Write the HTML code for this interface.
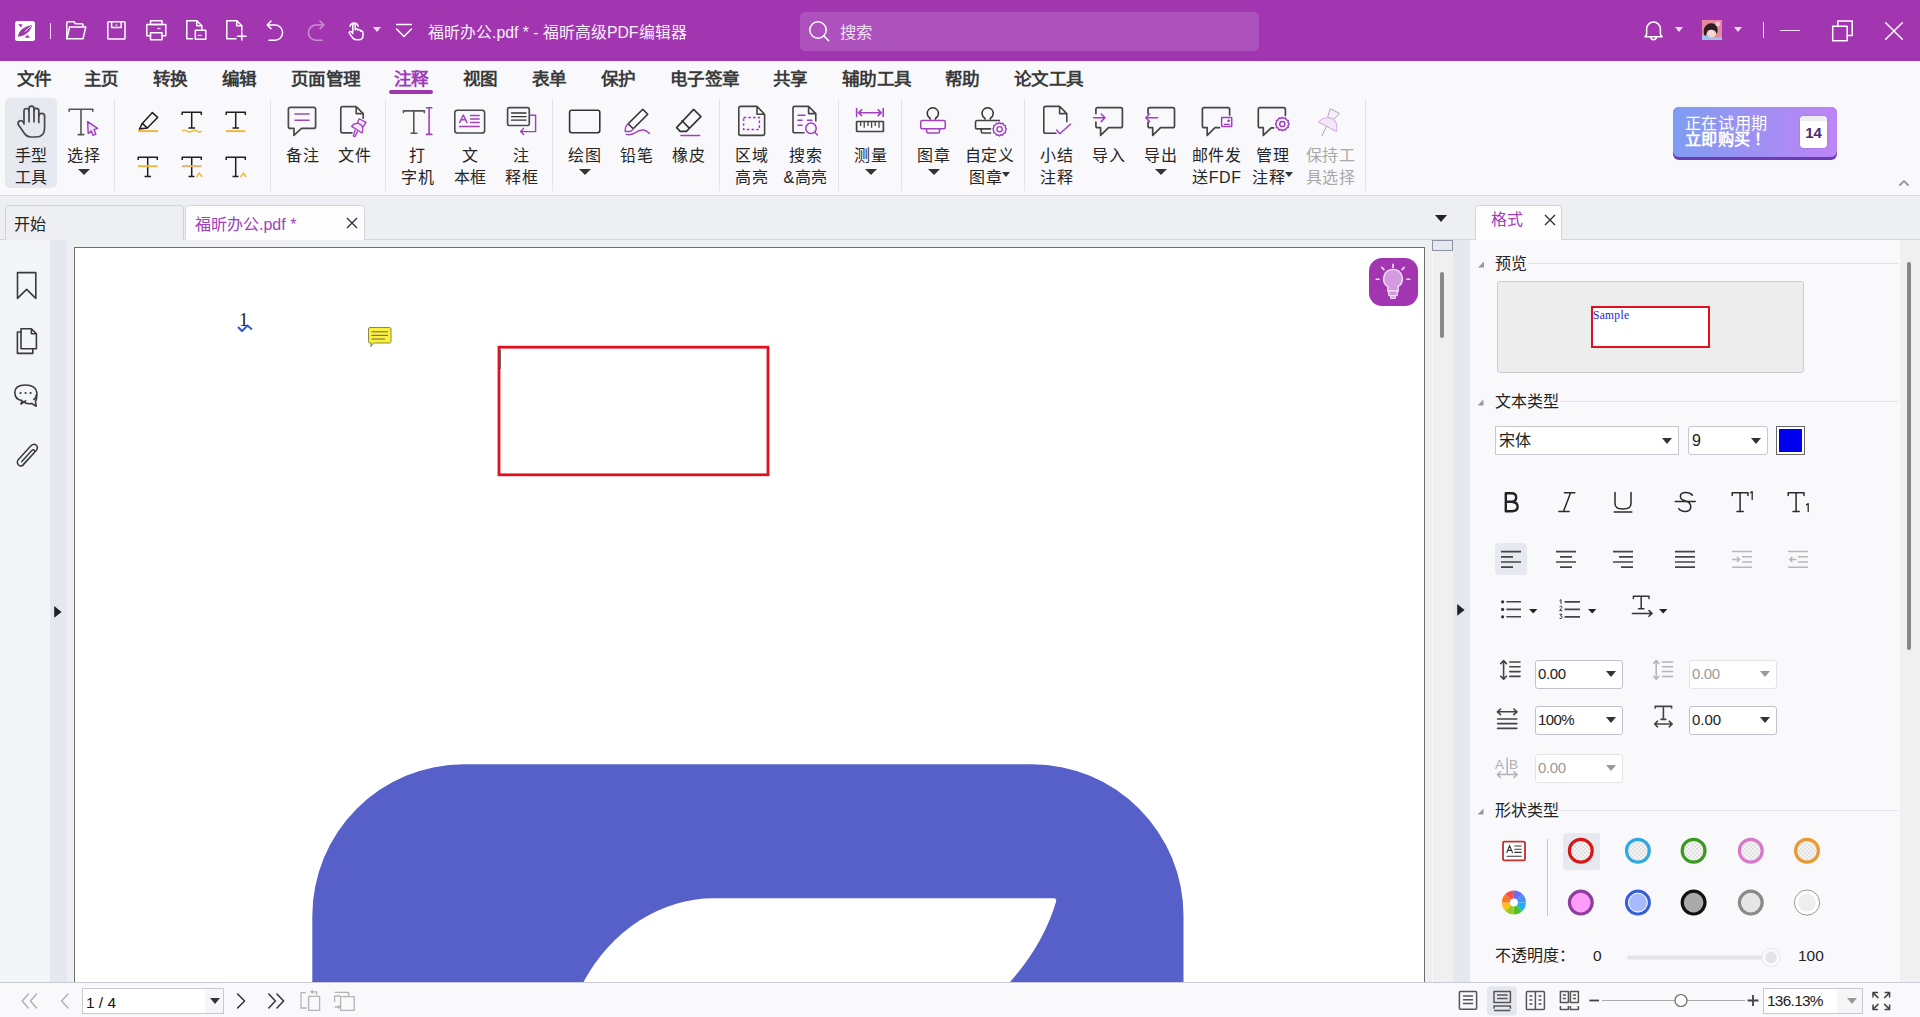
<!DOCTYPE html>
<html lang="zh-CN"><head><meta charset="utf-8">
<style>
*{box-sizing:border-box;margin:0;padding:0}
html,body{width:1920px;height:1017px;overflow:hidden;background:#F9F9FC;font-family:"Liberation Sans",sans-serif;color:#222}
.a{position:absolute}
.t{position:absolute;white-space:nowrap;line-height:1}
svg{position:absolute;overflow:visible}
.mi{position:absolute;top:70px;font-size:17.6px;font-weight:700;color:#3A3A3A;line-height:18px;white-space:nowrap;letter-spacing:-0.6px}
.rt{position:absolute;width:100px;font-size:16px;color:#252525;line-height:22px;text-align:center;white-space:nowrap;letter-spacing:0.6px;text-indent:0.6px}
.ia{display:inline-block;width:0;height:0;border-left:4px solid transparent;border-right:4px solid transparent;border-top:5px solid #333;vertical-align:top;margin-top:5px;margin-left:0}
.sep{position:absolute;top:99px;width:1px;height:92px;background:#E2E4EA}
.ic{fill:none;stroke:#444;stroke-width:1.6;stroke-linecap:round;stroke-linejoin:round}
.pp{fill:none;stroke:#A03FC0;stroke-width:1.6;stroke-linecap:round;stroke-linejoin:round}
.wh{fill:none;stroke:#fff;stroke-width:1.5;stroke-linecap:round;stroke-linejoin:round}
.arr{position:absolute;width:0;height:0;border-left:6px solid transparent;border-right:6px solid transparent;border-top:6px solid #333}
</style></head><body>
<!-- title bar -->
<div class="a" style="left:0;top:0;width:1920px;height:61px;background:#A236B1"></div>
<!-- menubar+ribbon -->
<div class="a" style="left:0;top:61px;width:1920px;height:134px;background:#F9F9FC"></div>
<div class="a" style="left:0;top:195px;width:1920px;height:1px;background:#D5D8E0"></div>
<div class="a" style="left:5px;top:98px;width:52px;height:90px;border-radius:5px;background:#E7E9F0"></div>
<!-- tab bar -->
<div class="a" style="left:0;top:196px;width:1920px;height:44px;background:#EEEFF3"></div>
<div class="a" style="left:0;top:239px;width:1920px;height:1px;background:#D3D6DE"></div>
<!-- left nav -->
<div class="a" style="left:0;top:240px;width:50px;height:742px;background:#F4F5F8"></div>
<div class="a" style="left:50px;top:240px;width:17px;height:742px;background:#E5E8F0"></div>
<!-- doc bg -->
<div class="a" style="left:67px;top:240px;width:1366px;height:742px;background:#EEEFF3"></div>
<!-- page -->
<div class="a" style="left:74px;top:247px;width:1351px;height:740px;background:#fff;border:1px solid #6E6E6E;border-bottom:none"></div>
<!-- doc scrollbar -->
<div class="a" style="left:1432px;top:240px;width:1px;height:742px;background:#FAFAFA"></div>
<div class="a" style="left:1433px;top:240px;width:20px;height:742px;background:#F0F0F0"></div>
<div class="a" style="left:1432px;top:240px;width:21px;height:11px;background:#E6E8F0;border:1px solid #8C93A8"></div>
<div class="a" style="left:1440px;top:272px;width:4px;height:66px;background:#888;border-radius:2px"></div>
<!-- right strip -->
<div class="a" style="left:1453px;top:240px;width:17px;height:742px;background:#E5E8F0"></div>
<!-- right panel -->
<div class="a" style="left:1470px;top:240px;width:430px;height:742px;background:#F9F9FC"></div>
<div class="a" style="left:1900px;top:240px;width:20px;height:742px;background:#F0F0F0"></div>
<div class="a" style="left:1907px;top:262px;width:4px;height:388px;background:#888;border-radius:2px"></div>
<!-- status bar -->
<div class="a" style="left:0;top:982px;width:1920px;height:1px;background:#C9CCD4"></div>
<div class="a" style="left:0;top:983px;width:1920px;height:34px;background:#F9F9FC"></div>
<!-- logo -->
<svg style="left:15px;top:21px" width="20" height="20" viewBox="0 0 20 20">
<rect x="0" y="0" width="20" height="20" rx="2.5" fill="#fff"/>
<path d="M2.8 15.8 C3.6 10 8 5.4 17.2 3.9 C15.6 10 11 14.6 2.8 15.8 Z" fill="#A236B1"/>
<path d="M3.1 3.3 L7.6 3.3 L5.9 6.5 Z" fill="#A236B1"/>
<path d="M9.7 16.8 L15 16.8 L12.4 13.8 Z" fill="#A236B1"/>
<path d="M9.8 10.6 L16.4 4.8" stroke="#fff" stroke-width="0.9" fill="none"/>
</svg>
<div class="a" style="left:50px;top:23px;width:1.2px;height:16px;background:#F3DDF6"></div>
<!-- folder -->
<svg style="left:66px;top:21px" width="21" height="19" viewBox="0 0 21 19">
<path class="wh" d="M0.8 17.8 L0.8 2.2 Q0.8 0.8 2.2 0.8 L8 0.8 L9.5 2.8 L16 2.8 Q17 2.8 17 3.8 L17 5.6" stroke="#F6E0FA"/>
<path class="wh" d="M0.8 17.8 L3.6 6 L19.8 6 L17 17.8 Z" stroke="#F6E0FA"/>
</svg>
<!-- save -->
<svg style="left:107px;top:21px" width="19" height="19" viewBox="0 0 19 19">
<rect class="wh" x="0.8" y="0.8" width="17.2" height="17.2" rx="0.8" stroke="#F6E0FA"/>
<path class="wh" d="M4.6 0.8 L4.6 6.6 L14.2 6.6 L14.2 0.8" stroke="#F6E0FA"/>
<path d="M8.4 4.2 L10.4 4.2" stroke="#F6E0FA" stroke-width="1.2"/>
</svg>
<!-- print -->
<svg style="left:146px;top:20px" width="21" height="21" viewBox="0 0 21 21">
<rect class="wh" x="4.5" y="0.8" width="11.5" height="3.8" stroke="#F6E0FA"/>
<path class="wh" d="M4.5 15.8 L0.8 15.8 L0.8 4.6 L19.8 4.6 L19.8 15.8 L16 15.8" stroke="#F6E0FA"/>
<rect class="wh" x="4.5" y="12.8" width="11.5" height="6.9" stroke="#F6E0FA"/>
<path d="M11.2 8.5 L14.5 8.5" stroke="#F6E0FA" stroke-width="1.3"/>
</svg>
<!-- doc export -->
<svg style="left:186px;top:20px" width="21" height="21" viewBox="0 0 21 21">
<path class="wh" d="M6.5 18.8 L0.8 18.8 L0.8 0.8 L10.8 0.8 L15.8 5.8 L15.8 10" stroke="#F6E0FA"/>
<path class="wh" d="M10.8 0.8 L10.8 5.8 L15.8 5.8" stroke="#F6E0FA" stroke-width="1"/>
<rect class="wh" x="9.3" y="10.3" width="10.5" height="9" stroke="#F6E0FA"/>
<path d="M11.8 15.4 L15.8 15.4" stroke="#F6E0FA" stroke-width="1.2"/>
</svg>
<!-- new doc -->
<svg style="left:226px;top:20px" width="21" height="21" viewBox="0 0 21 21">
<path class="wh" d="M10 18.8 L0.8 18.8 L0.8 0.8 L10.8 0.8 L15.8 5.8 L15.8 11" stroke="#F6E0FA"/>
<path class="wh" d="M10.8 0.8 L10.8 5.8 L15.8 5.8" stroke="#F6E0FA" stroke-width="1"/>
<path class="wh" d="M15.8 12.5 L15.8 20 M11.5 16.3 L20 16.3" stroke="#F6E0FA"/>
</svg>
<!-- undo -->
<svg style="left:266px;top:20px" width="19" height="21" viewBox="0 0 19 21">
<path class="wh" d="M1.6 5 L9 5 A7.6 7.6 0 0 1 9 20.2 L3 20.2" stroke="#F6E0FA"/>
<path class="wh" d="M5 1 L1.2 5 L5 8.6" stroke="#F6E0FA"/>
</svg>
<!-- redo dim -->
<svg style="left:306px;top:20px;opacity:.45" width="19" height="21" viewBox="0 0 19 21">
<path class="wh" d="M17.4 5 L10 5 A7.6 7.6 0 0 0 10 20.2 L16 20.2" stroke="#F6E0FA"/>
<path class="wh" d="M14 1 L17.8 5 L14 8.6" stroke="#F6E0FA"/>
</svg>
<!-- hand pointer -->
<svg style="left:348px;top:20px" width="17" height="21" viewBox="0 0 17 21">
<path class="wh" d="M4.8 12.2 V5 Q4.8 3.5 6 3.5 Q7.2 3.5 7.2 5 V9.8 Q7.6 8.6 8.8 8.8 Q9.9 9 9.9 10.2 Q10.4 9.3 11.5 9.6 Q12.5 10 12.5 11.2 Q13.1 10.6 13.9 11 Q15 11.5 15 13 V15.2 Q15 19.8 10.6 19.8 H8.6 Q6 19.8 4.6 17.8 L1.4 13.4 Q0.8 12.3 1.8 11.7 Q2.8 11.2 3.8 12.2 L4.8 13.4" stroke="#F6E0FA" stroke-width="1.3"/>
<path class="wh" d="M2.1 6.2 A4.1 4.1 0 0 1 10.1 6.2" stroke="#F6E0FA" stroke-width="1.2"/>
</svg>
<div class="arr" style="left:373px;top:27px;border-left-width:4px;border-right-width:4px;border-top:5px solid #F3DDF6"></div>
<!-- customize -->
<svg style="left:396px;top:23px" width="16" height="15" viewBox="0 0 16 15">
<path class="wh" d="M0.6 1.5 L15.4 1.5 M0.6 6 L8 13.6 L15.4 6" stroke="#F6E0FA" stroke-width="1.3"/>
</svg>
<div class="t" style="left:428px;top:24px;font-size:15.8px;color:#FAF0FC;line-height:17px">福昕办公.pdf * - 福昕高级PDF编辑器</div>
<!-- search -->
<div class="a" style="left:800px;top:11.5px;width:459px;height:39px;border-radius:5px;background:#AD51BD"></div>
<svg style="left:809px;top:21px" width="21" height="21" viewBox="0 0 21 21">
<circle cx="9" cy="9" r="8.2" class="wh" stroke="#F6E0FA" stroke-width="1.5"/>
<path d="M14.8 14.8 L19.6 19.6" class="wh" stroke="#F6E0FA" stroke-width="1.5"/>
</svg>
<div class="t" style="left:840px;top:24px;font-size:16.4px;color:#F2DFF5;line-height:17px">搜索</div>
<!-- bell -->
<svg style="left:1643px;top:20px" width="21" height="21" viewBox="0 0 21 21">
<path class="wh" d="M2 16.8 L3.6 14.5 L3.6 9 A6.9 6.9 0 0 1 17.4 9 L17.4 14.5 L19 16.8 Z" stroke="#F6E0FA" stroke-width="1.4"/>
<path class="wh" d="M7.6 16.8 A2.9 2.9 0 0 0 13.4 16.8" stroke="#F6E0FA" stroke-width="1.4"/>
</svg>
<div class="arr" style="left:1675px;top:27px;border-left-width:4.5px;border-right-width:4.5px;border-top:5px solid #F3DDF6"></div>
<!-- avatar -->
<svg style="left:1702px;top:20px" width="20" height="20" viewBox="0 0 20 20">
<rect width="20" height="20" fill="#E8889E"/>
<path d="M0 20 V15 Q4 13 8 16 Q12 19 20 17 V20 Z" fill="#9EC4EC"/>
<path d="M2 15 Q0.5 6 7 3.5 Q13 2 15 7 Q16.5 11 14.5 14 Q12 9 7 10 Q4.5 11 4 16 Z" fill="#2A2024"/>
<path d="M5 13.5 Q6 9.6 10 9.8 Q14 10.4 14 14 Q13.4 17.4 9.6 17.4 Q5.6 17 5 13.5 Z" fill="#F4D6CE"/>
<circle cx="15.8" cy="4" r="2.4" fill="#F6C8DA"/>
</svg>
<div class="arr" style="left:1734px;top:27px;border-left-width:4.5px;border-right-width:4.5px;border-top:5px solid #F3DDF6"></div>
<div class="a" style="left:1763px;top:22px;width:1.2px;height:16px;background:#F3DDF6"></div>
<div class="a" style="left:1780px;top:29.5px;width:20px;height:1.3px;background:#F6E0FA"></div>
<svg style="left:1832px;top:20px" width="21" height="22" viewBox="0 0 21 22">
<rect x="0.7" y="6.3" width="14.5" height="14.5" class="wh" stroke="#F6E0FA" stroke-width="1.4"/>
<path class="wh" d="M5.8 6.3 L5.8 0.9 L20.2 0.9 L20.2 15.4 L15.2 15.4" stroke="#F6E0FA" stroke-width="1.4"/>
</svg>
<svg style="left:1885px;top:22px" width="18" height="18" viewBox="0 0 18 18">
<path class="wh" d="M0.7 0.7 L17.3 17.3 M17.3 0.7 L0.7 17.3" stroke="#F6E0FA" stroke-width="1.4"/>
</svg>
<div class="mi" style="left:17px">文件</div>
<div class="mi" style="left:84px">主页</div>
<div class="mi" style="left:153px">转换</div>
<div class="mi" style="left:222px">编辑</div>
<div class="mi" style="left:291px">页面管理</div>
<div class="mi" style="left:394px;color:#A038B8">注释</div>
<div class="a" style="left:389px;top:90px;width:44px;height:4px;border-radius:2px;background:#A035B0"></div>
<div class="mi" style="left:463px">视图</div>
<div class="mi" style="left:532px">表单</div>
<div class="mi" style="left:601px">保护</div>
<div class="mi" style="left:670px">电子签章</div>
<div class="mi" style="left:773px">共享</div>
<div class="mi" style="left:842px">辅助工具</div>
<div class="mi" style="left:945px">帮助</div>
<div class="mi" style="left:1014px">论文工具</div>
<div class="rt" style="left:-19px;top:144.5px">手型</div>
<div class="rt" style="left:-19px;top:166.5px">工具</div>
<div class="rt" style="left:33.5px;top:144.5px">选择</div>
<div class="arr" style="left:77.5px;top:169px;border-left-width:6px;border-right-width:6px;border-top-width:6px"></div>
<div class="rt" style="left:252.5px;top:144.5px">备注</div>
<div class="rt" style="left:304.5px;top:144.5px">文件</div>
<div class="rt" style="left:367.5px;top:144.5px">打</div>
<div class="rt" style="left:367.5px;top:166.5px">字机</div>
<div class="rt" style="left:420px;top:144.5px">文</div>
<div class="rt" style="left:420px;top:166.5px">本框</div>
<div class="rt" style="left:471.5px;top:144.5px">注</div>
<div class="rt" style="left:471.5px;top:166.5px">释框</div>
<div class="rt" style="left:534.5px;top:144.5px">绘图</div>
<div class="arr" style="left:578.5px;top:169px;border-left-width:6px;border-right-width:6px;border-top-width:6px"></div>
<div class="rt" style="left:586.5px;top:144.5px">铅笔</div>
<div class="rt" style="left:638.5px;top:144.5px">橡皮</div>
<div class="rt" style="left:701.5px;top:144.5px">区域</div>
<div class="rt" style="left:701.5px;top:166.5px">高亮</div>
<div class="rt" style="left:755.5px;top:144.5px">搜索</div>
<div class="rt" style="left:755.5px;top:166.5px">&amp;高亮</div>
<div class="rt" style="left:820.5px;top:144.5px">测量</div>
<div class="arr" style="left:864.5px;top:169px;border-left-width:6px;border-right-width:6px;border-top-width:6px"></div>
<div class="rt" style="left:883.5px;top:144.5px">图章</div>
<div class="arr" style="left:927.5px;top:169px;border-left-width:6px;border-right-width:6px;border-top-width:6px"></div>
<div class="rt" style="left:939.5px;top:144.5px">自定义</div>
<div class="rt" style="left:939.5px;top:166.5px">图章<span class="ia"></span></div>
<div class="rt" style="left:1006.5px;top:144.5px">小结</div>
<div class="rt" style="left:1006.5px;top:166.5px">注释</div>
<div class="rt" style="left:1058.5px;top:144.5px">导入</div>
<div class="rt" style="left:1110.5px;top:144.5px">导出</div>
<div class="arr" style="left:1154.5px;top:169px;border-left-width:6px;border-right-width:6px;border-top-width:6px"></div>
<div class="rt" style="left:1166.5px;top:144.5px">邮件发</div>
<div class="rt" style="left:1166.5px;top:166.5px">送FDF</div>
<div class="rt" style="left:1222.5px;top:144.5px">管理</div>
<div class="rt" style="left:1222.5px;top:166.5px">注释<span class="ia"></span></div>
<div class="rt" style="left:1280.5px;top:144.5px;color:#A8A8A8">保持工</div>
<div class="rt" style="left:1280.5px;top:166.5px;color:#A8A8A8">具选择</div>
<div class="sep" style="left:114px"></div>
<div class="sep" style="left:270px"></div>
<div class="sep" style="left:385px"></div>
<div class="sep" style="left:552px"></div>
<div class="sep" style="left:719px"></div>
<div class="sep" style="left:838px"></div>
<div class="sep" style="left:901px"></div>
<div class="sep" style="left:1024px"></div>
<div class="sep" style="left:1365px"></div>
<svg style="left:0;top:0" width="1920" height="200" viewBox="0 0 1920 200">
<g fill="none" stroke="#474747" stroke-width="1.7" stroke-linecap="round" stroke-linejoin="round">
<!-- hand -->
<path d="M24 124 V111 A2.5 2.5 0 0 1 29 111 V108.6 A2.5 2.5 0 0 1 34 108.6 V110.8 A2.4 2.4 0 0 1 38.8 110.8 V116.3 A2.9 2.9 0 0 1 44.6 116.3 V128 Q44.6 137 36 137 L30.5 137 Q27 137 24.5 133.5 L18.4 124.8 Q17.2 122.4 19.4 121 Q21.6 119.8 23.4 122.4 L24 123.4"/>
<path d="M29 111 V121.8 M34 108.6 V121.8 M38.8 113 V122.6"/>
<!-- select T -->
<path d="M69.2 111.2 V109.2 H92.8 V111.2 M81 109.2 V134.5 M78.2 134.6 H83.8" stroke="#555" stroke-width="1.6"/>
</g>
<path d="M87.6 121.6 L97.6 128.4 L94 129.6 L95.9 134.2 L93.1 135.4 L91.2 130.9 L88.2 133.6 Z" fill="#F2E4F8" stroke="#A03FC0" stroke-width="1.4" stroke-linejoin="round"/>
<!-- highlight group -->
<g fill="none" stroke="#1E1E1E" stroke-width="1.5" stroke-linejoin="round">
<path d="M152.4 112.6 L157.6 117.4 L147.3 128 L142.3 123.4 Z"/>
<path d="M142.3 123.4 L139.4 129 L147.3 128"/>
<path d="M182.2 115 V112.3 H201.3 V115 M191.7 112.3 V128 M188.5 128 H195"/>
<path d="M226.2 115 V112.3 H245.3 V115 M235.7 112.3 V128 M232.5 128 H239"/>
<path d="M138.2 160 V157.3 H157.3 V160 M147.7 157.3 V176.6 M144.5 176.6 H151"/>
<path d="M182.2 160 V157.3 H201.3 V160 M191.7 157.3 V176.6 M188.5 176.6 H194.5"/>
<path d="M226.2 160 V157.3 H245.3 V160 M235.7 157.3 V176.6 M232.5 176.6 H238.5"/>
</g>
<path d="M140.5 128.5 L143 127.5 L141.8 126 Z" fill="#E8A820"/>
<g fill="none" stroke="#F0B840" stroke-width="2" stroke-linecap="butt">
<path d="M138 131.1 H158"/>
<path d="M182 131.2 Q184.5 129.4 187 131.2 T192 131.2 T197 131.2 T202 131.2" stroke-width="1.5"/>
<path d="M226 131.1 H245.5"/>
<path d="M138 166.2 H157.5"/>
<path d="M182 166.2 H201.5" stroke="#E8B070"/>
<path d="M196.5 177 L199.3 173 L202.1 177" stroke-width="1.4"/>
<path d="M240.5 177 L243.3 173 L246.1 177" stroke-width="1.4"/>
</g>
<!-- notes -->
<g fill="none" stroke="#4A4A4A" stroke-width="1.7" stroke-linejoin="round" stroke-linecap="round">
<path d="M294 128.4 H290.3 Q288.4 128.4 288.4 126.4 V109.3 Q288.4 107.4 290.3 107.4 H313.7 Q315.6 107.4 315.6 109.3 V126.4 Q315.6 128.4 313.7 128.4 H301.5 L293.9 135.4 Z"/>
<path d="M352 132.8 H342.6 Q340.8 132.8 340.8 131 V108.4 Q340.8 106.6 342.6 106.6 H356.2 L363.2 113.6 V118.2 M356.2 106.6 V113.6 H363.2"/>
</g>
<path d="M295 114 H309 M295 120.3 H309" stroke="#9A4CB0" stroke-width="1.6" stroke-linecap="round"/>
<g fill="#F6E8FA" stroke="#A03FC0" stroke-width="1.3" stroke-linejoin="round">
<path d="M359.2 118.8 L366 122.4 L363.2 126.8 L357.2 123.4 Z"/>
<path d="M351.6 126.4 Q355 121.5 360.5 124.4 Q364.3 128 362 133 Z"/>
<path d="M355.3 130 L353.4 135.8 Q354.3 137 355.5 136 L357.6 131.2"/>
</g>
<!-- typewriter etc -->
<g fill="none" stroke="#555" stroke-width="1.6" stroke-linejoin="round" stroke-linecap="round">
<path d="M403.4 112.6 V110.9 H424.3 V112.6 M413.8 110.9 V133 M411 133.2 H416.8"/>
<rect x="454.8" y="110.2" width="29.8" height="22.8" rx="2.6" stroke="#4A4A4A"/>
<rect x="507.6" y="107.6" width="21.7" height="17.9" rx="1.6" stroke="#4A4A4A" stroke-width="1.7"/>
<path d="M511.5 113 H526 M511.5 116.6 H526 M511.5 120.2 H526" stroke="#333" stroke-width="1.3"/>
</g>
<g fill="none" stroke="#A03FC0" stroke-width="1.4" stroke-linejoin="round" stroke-linecap="round">
<path d="M429.1 107.8 V134.4 M426.6 107.8 H431.8 M426.6 134.4 H431.8" stroke-width="1.6"/>
<path d="M459.6 122.6 L463.3 115 L467 122.6 M461 119.8 H465.6"/>
<path d="M470.6 115.5 H479.2 M470.6 119 H479.2 M470.6 122.5 H479.2 M459.6 126.5 H479.2"/>
<path d="M529.4 115.2 H535.6 V131.6 H520.6 M523.6 128.6 L520.6 131.6 L523.6 134.6"/>
</g>
<!-- drawing -->
<g fill="none" stroke="#333" stroke-width="1.6" stroke-linejoin="round" stroke-linecap="round">
<rect x="569.6" y="110.3" width="30.2" height="22.4" rx="2.2"/>
<path d="M642.8 109.3 L647.7 114.2 L633.2 128.7 L628.2 123.7 Z"/>
<path d="M693.6 109.4 L700.9 116.6 L686.4 131.4 H680.2 L676.6 127.6 Z M682 120.8 L689 127.9"/>
</g>
<g fill="none" stroke="#A03FC0" stroke-width="1.4" stroke-linejoin="round" stroke-linecap="round">
<path d="M628.2 123.7 Q625 126 625.2 131.5 L630 131.5 Q632 131 633.2 128.7"/>
<path d="M626.2 134.3 Q630 135.6 634.5 133.2 Q639.5 129.5 644 130 Q647 131 649.5 133.5"/>
<path d="M681 135.5 H699.6" stroke-width="1.6"/>
</g>
<!-- area highlight / search highlight -->
<g fill="none" stroke="#444" stroke-width="1.6" stroke-linejoin="round" stroke-linecap="round">
<path d="M757 106.4 H740.6 Q738.8 106.4 738.8 108.2 V133.6 Q738.8 135.4 740.6 135.4 H762.8 Q764.6 135.4 764.6 133.6 V114.2 L757 106.4 V114.2 H764.6"/>
<path d="M804 132.8 H794.8 Q793 132.8 793 131 V108.2 Q793 106.4 794.8 106.4 H808.6 L815.8 113.6 V121 M808.6 106.4 V113.6 H815.8"/>
</g>
<g fill="none" stroke="#A03FC0" stroke-width="1.5" stroke-linecap="butt">
<rect x="743.6" y="117.6" width="15.8" height="11.8" stroke-dasharray="2.6 2.1"/>
<path d="M798 115.3 H805 M798 120.3 H802 M807.5 120.3 H812 M798 125.3 H802" stroke-linecap="round"/>
<circle cx="811" cy="128.3" r="5.2"/>
<path d="M814.8 132.2 L817.4 135" stroke-linecap="round"/>
</g>
<!-- measure -->
<g fill="none" stroke="#A03FC0" stroke-width="1.6" stroke-linecap="round" stroke-linejoin="round">
<path d="M856.6 108.6 V116.4 M883.2 108.6 V116.4 M858.6 112.7 H881.2 M861.6 109.8 L858.6 112.7 L861.6 115.6 M878.2 109.8 L881.2 112.7 L878.2 115.6"/>
</g>
<g fill="none" stroke="#444" stroke-width="1.7" stroke-linejoin="round">
<rect x="856.6" y="121.5" width="26.8" height="10" rx="0.6"/>
<path d="M860.6 121.5 V126 M864.2 121.5 V127.8 M868 121.5 V126 M871.6 121.5 V127.8 M875.2 121.5 V126 M879 121.5 V127.8" stroke-width="1.3"/>
</g>
<!-- stamp -->
<g fill="none" stroke="#333" stroke-width="1.5" stroke-linejoin="round">
<path d="M930.6 119.6 L929.8 118 A5.6 5.6 0 1 1 935.9 118 L935.1 119.6"/>
<path d="M985.4 119.6 L984.6 118 A5.6 5.6 0 1 1 990.7 118 L989.9 119.6"/>
<path d="M1000 120.5 H977.2 Q975.5 120.5 975.5 122.2 V127.2 Q975.5 128.9 977.2 128.9 H991.2 M981.3 128.9 V131.4 Q981.3 133 982.9 133 H991.2" stroke="#444" stroke-width="1.6"/>
</g>
<g fill="none" stroke="#A03FC0" stroke-width="1.5" stroke-linejoin="round">
<rect x="920.7" y="120.5" width="24.6" height="8.3" rx="1.5"/>
<path d="M926.6 128.8 V131.6 Q926.6 133 928 133 H938.2 Q939.5 133 939.5 131.6 V128.8"/>
</g>
<g fill="none" stroke="#A03FC0" stroke-width="1.4">
<path id="gear" d="M999.6 122.4 L1001 123.7 L1002.9 123.3 L1003.6 125.1 L1005.5 125.7 L1005.3 127.6 L1006.4 129.2 L1005.3 130.8 L1005.5 132.7 L1003.6 133.3 L1002.9 135.1 L1001 134.7 L999.6 136 L998.2 134.7 L996.3 135.1 L995.6 133.3 L993.7 132.7 L993.9 130.8 L992.8 129.2 L993.9 127.6 L993.7 125.7 L995.6 125.1 L996.3 123.3 L998.2 123.7 Z" stroke-linejoin="round"/>
<circle cx="999.6" cy="129.2" r="2.6"/>
</g>
<!-- summary -->
<path d="M1056 133.2 H1045.6 Q1043.8 133.2 1043.8 131.4 V108.2 Q1043.8 106.4 1045.6 106.4 H1059.6 L1066.8 113.6 V121.6 M1059.6 106.4 V113.6 H1066.8" fill="none" stroke="#444" stroke-width="1.6" stroke-linejoin="round" stroke-linecap="round"/>
<path d="M1056.6 130 L1059.8 133.8 L1070.6 124" fill="none" stroke="#A03FC0" stroke-width="1.5" stroke-linecap="round" stroke-linejoin="round"/>
<!-- import/export/mail/manage bubbles -->
<g fill="none" stroke="#444" stroke-width="1.7" stroke-linejoin="round" stroke-linecap="round">
<path d="M1095.9 113.6 V109.4 Q1095.9 107.7 1097.6 107.7 H1120.7 Q1122.4 107.7 1122.4 109.4 V126 Q1122.4 127.7 1120.7 127.7 H1108.5 L1100.6 135.4 V127.7 H1097.6 Q1095.9 127.7 1095.9 126 V122"/>
<path d="M1148 113.6 V109.4 Q1148 107.7 1149.7 107.7 H1172.8 Q1174.5 107.7 1174.5 109.4 V126 Q1174.5 127.7 1172.8 127.7 H1160.6 L1152.7 135.4 V127.7 H1149.7 Q1148 127.7 1148 126 V122"/>
<path d="M1229.6 115 V109.4 Q1229.6 107.7 1227.9 107.7 H1204.1 Q1202.4 107.7 1202.4 109.4 V126 Q1202.4 127.7 1204.1 127.7 H1207.2 V135.4 L1215 127.7 H1219.5"/>
<path d="M1285.4 115.5 V109.4 Q1285.4 107.7 1283.7 107.7 H1260 Q1258.3 107.7 1258.3 109.4 V126 Q1258.3 127.7 1260 127.7 H1263.3 V135.4 L1271.2 127.9 H1273.6"/>
</g>
<g fill="none" stroke="#A03FC0" stroke-width="1.5" stroke-linejoin="round" stroke-linecap="round">
<path d="M1093.6 117.8 H1105 M1101.2 114 L1105 117.8 L1101.2 121.6"/>
<path d="M1157.6 117.8 H1145.8 M1149.6 114 L1145.8 117.8 L1149.6 121.6"/>
<rect x="1221.6" y="117.5" width="10.1" height="9" rx="0.5"/>
<path d="M1224.2 124.4 H1229.4" stroke-width="1.2"/>
<circle cx="1228.6" cy="120.8" r="0.6" fill="#A03FC0"/>
<use href="#gear" transform="translate(282.7 -5.2)"/>
<circle cx="1282.3" cy="124" r="2.6"/>
</g>
<!-- keep tool (dim) -->
<g stroke-linejoin="round" stroke-linecap="round">
<path d="M1330.6 109 L1339.6 113.4 L1333.6 119.6 L1328 117.2 Z" fill="#F7F0FA" stroke="#AAA" stroke-width="1"/>
<path d="M1318.4 122 Q1326 115.5 1333 119 Q1338 123 1336.4 131.4 Z" fill="#F6E6FA" stroke="#D8B0E4" stroke-width="1.1"/>
<path d="M1326.4 126.6 L1322 135.6" stroke="#AAA" stroke-width="1"/>
</g>
</svg>
<!-- trial badge -->
<div class="a" style="left:1673px;top:107px;width:164px;height:53px;border-radius:6px;background:#6B3AB8"></div>
<div class="a" style="left:1673px;top:107px;width:164px;height:50px;border-radius:6px;background:linear-gradient(90deg,#7F9DF2 0%,#9B92F2 45%,#BE84F6 100%)"></div>
<div class="t" style="left:1684.5px;top:114.5px;font-size:16.2px;letter-spacing:0.7px;line-height:17px;color:#fff">正在试用期</div>
<div class="t" style="left:1684.5px;top:131px;font-size:16.2px;letter-spacing:0.5px;line-height:17px;color:#fff;font-weight:700">立即购买<span style="margin-left:3px">！</span></div>
<div class="a" style="left:1800px;top:116px;width:27px;height:32px;border-radius:4px;background:#fff;box-shadow:0 0 2px rgba(120,60,180,.4)"></div>
<div class="a" style="left:1800px;top:116px;width:27px;height:5px;border-radius:4px 4px 0 0;background:#EEEEF2"></div>
<div class="t" style="left:1802px;top:124px;width:23px;text-align:center;font-size:15px;line-height:17px;color:#4A2A7A;font-weight:700">14</div>
<svg style="left:1898px;top:179px" width="12" height="8" viewBox="0 0 12 8"><path d="M1.5 6.5 L6 2 L10.5 6.5" fill="none" stroke="#999" stroke-width="1.8"/></svg>
<!-- doc tabs -->
<div class="a" style="left:5px;top:205px;width:179px;height:35px;background:#EEEFF3;border:1px solid #D0D3DC;border-bottom:none;border-radius:4px 4px 0 0"></div>
<div class="t" style="left:14px;top:216px;font-size:16px;line-height:17px;color:#222">开始</div>
<div class="a" style="left:185px;top:205px;width:180px;height:35px;background:#FDFDFE;border:1px solid #D3D6DE;border-bottom:none;border-radius:4px 4px 0 0"></div>
<div class="t" style="left:195px;top:216px;font-size:16px;line-height:17px;color:#A040B8">福昕办公.pdf *</div>
<svg style="left:346px;top:217px" width="12" height="12" viewBox="0 0 12 12"><path d="M1 1 L11 11 M11 1 L1 11" stroke="#333" stroke-width="1.4"/></svg>
<div class="arr" style="left:1435px;top:215px;border-left-width:6px;border-right-width:6px;border-top-width:7px;border-top-color:#222"></div>
<!-- panel tab -->
<div class="a" style="left:1475px;top:205px;width:87px;height:35px;background:#FDFDFE;border:1px solid #D3D6DE;border-bottom:none;border-radius:4px 4px 0 0"></div>
<div class="t" style="left:1491px;top:211px;font-size:16px;line-height:17px;color:#A040B8">格式</div>
<svg style="left:1544px;top:214px" width="12" height="12" viewBox="0 0 12 12"><path d="M1 1 L11 11 M11 1 L1 11" stroke="#333" stroke-width="1.4"/></svg>
<!-- left nav icons -->
<svg style="left:0;top:240px" width="70" height="742" viewBox="0 240 70 742">
<g fill="none" stroke="#3A3A3A" stroke-width="1.6" stroke-linejoin="round" stroke-linecap="round">
<path d="M17.5 272.6 H35.8 V298.4 L26.6 289.4 L17.5 298.4 Z"/>
<path d="M21 328.8 H31.4 L36.4 333.8 V348.8 H21 Z M31.4 328.8 V333.8 H36.4"/>
<path d="M21 332 H17.4 V353.4 H32.8 V348.8"/>
<path d="M33.8 399.4 Q37.5 396.6 36.8 392.6 Q35.6 385 25.2 385 Q15 385 14.8 392.6 Q14.8 399.6 22 400.6 L21 404 L25.6 400.8"/>
<path d="M36.2 395 Q37.4 398.6 35.4 401.6 L36.2 406.2 L31.6 403.4 Q27 404.6 23.4 401.6"/>
<path d="M23.2 464.6 L36.2 450.4 Q38.6 447.6 36.4 445.2 Q34 443 31.2 445.6 L18.4 459.4 Q16.2 462.4 18.6 465 Q21 467.2 23.6 464.6 L34 453 Q35.4 451.4 34.2 450.2 Q33 449.2 31.8 450.6 L21.8 461.6" stroke-width="1.5"/>
</g>
<circle cx="20.6" cy="393" r="1.1" fill="#3A3A3A"/><circle cx="25.6" cy="393" r="1.1" fill="#3A3A3A"/><circle cx="30.6" cy="393" r="1.1" fill="#3A3A3A"/>
<path d="M54.2 606 L61.6 611.9 L54.2 617.8 Z" fill="#222"/>
</svg>
<svg style="left:1453px;top:600px" width="17" height="20" viewBox="0 0 17 20"><path d="M4.2 4 L11.6 9.9 L4.2 15.8 Z" fill="#222"/></svg>
<!-- page content -->
<svg style="left:0;top:0" width="1430" height="982" viewBox="0 0 1430 982">
<path d="M312.3 982 V916 A151.7 151.7 0 0 1 464 764.3 H1032 A151.5 151.5 0 0 1 1183.5 915.8 V982 Z" fill="#5760C8"/>
<path d="M583.5 982 A154 180 0 0 1 714 898.3 H1053.5 Q1057 898.3 1056 902 Q1043 945 1010 982 Z" fill="#fff"/>
<!-- red rect -->
<rect x="499" y="347.2" width="269" height="127.6" fill="none" stroke="#E01020" stroke-width="2.8"/>
<rect x="499.2" y="350" width="1.6" height="19" fill="#555"/>
<!-- yellow note -->
<path d="M370 327.5 H389.5 Q391 327.5 391 329 V341.5 Q391 343 389.5 343 H373.5 L370.8 346.6 L371.2 343 H370 Q368.5 343 368.5 341.5 V329 Q368.5 327.5 370 327.5 Z" fill="#FAF03A" stroke="#6E6A3A" stroke-width="0.8"/>
<path d="M371.5 331.8 H388 M371.5 335.4 H388 M371.5 339 H385" stroke="#555" stroke-width="0.9"/>
<!-- caret -->
<path d="M238 327 L242 331 L247.5 325.5 L252 329.5" fill="none" stroke="#2C5BD8" stroke-width="2"/>
</svg>
<div class="t" style="left:239px;top:311px;font-family:'Liberation Serif',serif;font-size:19px;line-height:17px;color:#222">1</div>
<!-- lightbulb -->
<div class="a" style="left:1369px;top:258px;width:49px;height:48px;border-radius:13px;background:#A236B1"></div>
<svg style="left:1369px;top:258px" width="49" height="48" viewBox="0 0 49 48">
<g stroke="#F4E0F8" stroke-width="1.6" stroke-linecap="round" fill="none">
<path d="M24 6.2 V9.6 M12.8 9.4 L15 11.6 M35.2 9.4 L33 11.6 M7.2 21.2 H10 M38 21.2 H40.8"/>
</g>
<path d="M24 11.4 A9.4 9.4 0 0 0 18.8 28.6 V33 H29.2 V28.6 A9.4 9.4 0 0 0 24 11.4 Z" fill="#D49ADF" stroke="#F4E0F8" stroke-width="1.4"/>
<path d="M19.6 33 H28.4 V36.4 Q28.4 37.6 27.2 37.6 H20.8 Q19.6 37.6 19.6 36.4 Z M21.6 37.6 V39.6 Q21.6 40.4 22.4 40.4 H25.6 Q26.4 40.4 26.4 39.6 V37.6" fill="#D49ADF" stroke="#F4E0F8" stroke-width="1.2"/>
</svg>
<!-- panel sections -->
<svg style="left:1470px;top:240px" width="430" height="742" viewBox="1470 240 430 742">
<path d="M1478 267.5 L1484 267.5 L1484 261.5 Z" fill="#999"/>
<path d="M1528 263.5 H1898" stroke="#E2E3E8" stroke-width="1"/>
<path d="M1477.5 405.5 L1483.5 405.5 L1483.5 399.5 Z" fill="#999"/>
<path d="M1560 401.5 H1898" stroke="#E2E3E8" stroke-width="1"/>
<path d="M1477.5 814.5 L1483.5 814.5 L1483.5 808.5 Z" fill="#999"/>
<path d="M1560 810.5 H1898" stroke="#E2E3E8" stroke-width="1"/>
</svg>
<div class="t" style="left:1495px;top:255px;font-size:16px;line-height:17px;color:#222">预览</div>
<div class="a" style="left:1497px;top:281px;width:307px;height:92px;border:1px solid #C9CBD2;border-radius:3px;background:#EDEDED"></div>
<div class="a" style="left:1590.5px;top:305.5px;width:119px;height:42px;border:2.5px solid #E01020;background:#fff"></div>
<div class="t" style="left:1593px;top:310px;font-family:'Liberation Serif',serif;font-size:11.5px;line-height:11px;color:#2020E0;letter-spacing:0.3px">Sample</div>
<div class="t" style="left:1495px;top:393px;font-size:16px;line-height:17px;color:#222">文本类型</div>
<div class="a" style="left:1495px;top:426px;width:184px;height:29px;border:1px solid #C6C8D0;background:#fff"></div>
<div class="t" style="left:1499px;top:432px;font-size:16px;line-height:17px;color:#222">宋体</div>
<div class="arr" style="left:1662px;top:438px;border-left-width:5px;border-right-width:5px;border-top-width:6px"></div>
<div class="a" style="left:1688px;top:426px;width:80px;height:29px;border:1px solid #C6C8D0;border-radius:3px;background:#fff"></div>
<div class="t" style="left:1692px;top:432px;font-size:16px;line-height:17px;color:#222">9</div>
<div class="arr" style="left:1751px;top:438px;border-left-width:5px;border-right-width:5px;border-top-width:6px"></div>
<div class="a" style="left:1776px;top:426px;width:29px;height:29px;border:1px solid #666;background:#fff"></div>
<div class="a" style="left:1779px;top:429px;width:23px;height:23px;background:#0000F0"></div>
<!-- format buttons -->
<div class="a" style="left:1495px;top:543px;width:32px;height:32px;border-radius:4px;background:#E7E9F0"></div>
<div class="a" style="left:1562.5px;top:833px;width:37.5px;height:37px;border-radius:3px;background:#E7E9F0"></div>
<svg style="left:1470px;top:470px" width="430" height="510" viewBox="1470 470 430 510">
<path d="M1505.8 493.2 H1511.6 Q1516.2 493.2 1516.2 497.6 Q1516.2 501.3 1512 501.8 Q1517.6 502.4 1517.6 506.6 Q1517.6 511.2 1512.2 511.2 H1505.8 Z M1505.8 501.8 H1512" fill="none" stroke="#222" stroke-width="2.4" stroke-linejoin="round"/>
<g fill="none" stroke="#2A2A2A" stroke-width="1.5" stroke-linecap="round" stroke-linejoin="round">
<path d="M1564.4 492.8 H1574.8 M1558.8 511.6 H1569.2 M1570.6 492.8 L1563.4 511.6"/>
<path d="M1615 492.6 V503.4 Q1615 509 1623 509 Q1631 509 1631 503.4 V492.6 M1614.2 512 H1631.8"/>
<path d="M1692.4 495.2 Q1690 492.6 1685.6 492.6 Q1680.4 492.6 1680.4 496.4 Q1680.4 499.4 1685 500.8 Q1690.8 502.6 1690.8 506.6 Q1690.8 511.4 1685.2 511.4 Q1680.6 511.4 1678.8 508.6 M1675.2 501.4 H1695.2"/>
<path d="M1732.2 495.6 V492.8 H1748 V495.6 M1740.1 492.8 V511.4 M1737 511.6 H1743.2"/>
<path d="M1750.6 492.8 L1752.2 491.6 V499.6" stroke-width="1.3"/>
<path d="M1788.2 495.6 V492.8 H1804 V495.6 M1796.1 492.8 V511.4 M1793 511.6 H1799.2"/>
<path d="M1806.6 504.8 L1808.2 503.6 V511.6" stroke-width="1.3"/>
</g>
<g stroke="#444" stroke-width="1.7">
<path d="M1501 551.6 H1521 M1501 556.8 H1513 M1501 562 H1521 M1501 567.2 H1513"/>
<path d="M1556 551.6 H1576 M1560 556.8 H1572 M1556 562 H1576 M1560 567.2 H1572"/>
<path d="M1613 551.6 H1633 M1619 556.8 H1633 M1613 562 H1633 M1621 567.2 H1633"/>
<path d="M1675 551.6 H1695 M1675 556.8 H1695 M1675 562 H1695 M1675 567.2 H1695"/>
</g>
<g stroke="#B8B8B8" stroke-width="1.5" fill="none">
<path d="M1732 551.6 H1752 M1742 556.8 H1752 M1742 562 H1752 M1732 567.2 H1752 M1732 559.4 H1739.5 M1737 556.9 L1739.6 559.4 L1737 561.9"/>
<path d="M1788 551.6 H1808 M1798 556.8 H1808 M1798 562 H1808 M1788 567.2 H1808 M1790 559.4 H1796.5 M1792.4 556.9 L1789.8 559.4 L1792.4 561.9"/>
</g>
<g fill="#333">
<circle cx="1502.6" cy="601.8" r="1.6"/><circle cx="1502.6" cy="609.4" r="1.6"/><circle cx="1502.6" cy="616.8" r="1.6"/>
</g>
<path d="M1506.4 601.8 H1521 M1506.4 609.4 H1521 M1506.4 616.8 H1521" stroke="#444" stroke-width="1.6"/>
<path d="M1529 609 H1537.4 L1533.2 613.4 Z" fill="#222"/>
<path d="M1564.6 601.8 H1580 M1564.6 609.4 H1580 M1564.6 616.8 H1580" stroke="#444" stroke-width="1.7"/>
<g fill="none" stroke="#333" stroke-width="1" stroke-linejoin="round">
<path d="M1559.6 600.6 L1561 599.6 V604"/>
<path d="M1559.6 606.8 Q1560.6 605.8 1561.6 606.4 Q1562.4 607.4 1561.4 608.4 L1559.6 610.6 H1562.4"/>
<path d="M1559.6 614.2 H1562 L1560.6 616 Q1562.4 616.2 1562.2 617.6 Q1561.6 619.2 1559.6 618.4"/>
</g>
<path d="M1588 609 H1596.4 L1592.2 613.4 Z" fill="#222"/>
<g fill="none" stroke="#333" stroke-width="1.5" stroke-linecap="round" stroke-linejoin="round">
<path d="M1633.4 598.6 V596.2 H1649 V598.6 M1641.2 596.2 V608.6 M1638.6 608.8 H1643.8"/>
<path d="M1632.4 613.4 H1652 M1649 610.6 L1652 613.4 L1649 616.2"/>
</g>
<path d="M1659 609 H1667.4 L1663.2 613.4 Z" fill="#222"/>
<!-- spacing icons -->
<g fill="none" stroke="#444" stroke-width="1.6" stroke-linecap="round" stroke-linejoin="round">
<path d="M1503.6 661 V679 M1500.8 663.6 L1503.6 660.6 L1506.4 663.6 M1500.8 676.2 L1503.6 679.2 L1506.4 676.2"/>
<path d="M1509.8 662 H1520 M1509.8 666.8 H1520 M1509.8 671.6 H1520 M1509.8 676.4 H1520"/>
<path d="M1497.6 711.8 H1516.8 M1500.6 709 L1497.4 711.8 L1500.6 714.6 M1513.8 709 L1517 711.8 L1513.8 714.6"/>
<path d="M1497.6 719 H1516.8 M1497.6 723.6 H1516.8 M1497.6 728.4 H1516.8"/>
<path d="M1655.2 708 V706.4 H1671.6 V708 M1663.4 706.4 V719.2 M1661 719.4 H1665.8 M1654.8 724 H1672 M1657.6 721.2 L1654.6 724 L1657.6 726.8 M1669.2 721.2 L1672.2 724 L1669.2 726.8"/>
</g>
<g fill="none" stroke="#B4B4B4" stroke-width="1.5" stroke-linecap="round" stroke-linejoin="round">
<path d="M1656.2 661 V679 M1653.6 663.6 L1656.2 660.6 L1658.8 663.6 M1653.6 676.2 L1656.2 679.2 L1658.8 676.2"/>
<path d="M1662.4 662 H1672.6 M1662.4 666.8 H1672.6 M1662.4 671.6 H1672.6 M1662.4 676.4 H1672.6"/>
<path d="M1497.6 774.6 H1516.8 M1500.4 771.8 L1497.4 774.6 L1500.4 777.4 M1514 771.8 L1517 774.6 L1514 777.4 M1507.2 758 V774.6"/>
</g>
<!-- shape type -->
<rect x="1503" y="841.6" width="22" height="18.8" rx="1.5" fill="#fff" stroke="#C03030" stroke-width="1.8"/>
<path d="M1506.6 853 L1509.6 845.6 L1512.6 853 M1507.8 850.4 H1511.4 M1514.4 846 H1521.6 M1514.4 849.2 H1521.6 M1514.4 852.4 H1521.6 M1506.6 856.2 H1521.6" fill="none" stroke="#333" stroke-width="1.1"/>
<path d="M1547.5 839 V916" stroke="#C8C8C8" stroke-width="1"/>
<defs>
<pattern id="chk" width="4" height="4" patternUnits="userSpaceOnUse"><rect width="4" height="4" fill="#F4F4F4"/><rect width="2" height="2" fill="#E2E2E2"/><rect x="2" y="2" width="2" height="2" fill="#E2E2E2"/></pattern>
</defs>
<g stroke-width="3.2">
<circle cx="1580.8" cy="850.8" r="11.4" fill="url(#chk)" stroke="#D81818"/>
<circle cx="1637.9" cy="850.8" r="11.4" fill="url(#chk)" stroke="#30A8E0"/>
<circle cx="1693.6" cy="850.8" r="11.4" fill="url(#chk)" stroke="#3A9A20"/>
<circle cx="1750.8" cy="850.8" r="11.4" fill="url(#chk)" stroke="#D878C8"/>
<circle cx="1807" cy="850.8" r="11.4" fill="url(#chk)" stroke="#E89A30"/>
<circle cx="1580.8" cy="902.6" r="11.4" fill="#FF9CF8" stroke="#8E3CA0"/>
<circle cx="1637.9" cy="902.6" r="11.4" fill="#A8BAFF" stroke="#3560D8"/>
<circle cx="1693.6" cy="902.6" r="11.4" fill="#AAAAAA" stroke="#111"/>
<circle cx="1750.8" cy="902.6" r="11.4" fill="#E6E6E6" stroke="#8A8A8A"/>
</g>
<circle cx="1637.9" cy="902.6" r="9.4" fill="none" stroke="#fff" stroke-width="1"/>
<circle cx="1807" cy="902.6" r="12.6" fill="#fff" stroke="#999" stroke-width="1"/>
<circle cx="1807" cy="902.6" r="9" fill="#EEEEEE"/>
<!-- color wheel -->
<g transform="translate(1513.9 902.4)">
<path d="M0 0 L0 -12 A12 12 0 0 1 8.5 -8.5 Z" fill="#6C6CF0"/>
<path d="M0 0 L8.5 -8.5 A12 12 0 0 1 12 0 Z" fill="#4A90F8"/>
<path d="M0 0 L12 0 A12 12 0 0 1 8.5 8.5 Z" fill="#20B0F0"/>
<path d="M0 0 L8.5 8.5 A12 12 0 0 1 0 12 Z" fill="#50C030"/>
<path d="M0 0 L0 12 A12 12 0 0 1 -8.5 8.5 Z" fill="#A0C820"/>
<path d="M0 0 L-8.5 8.5 A12 12 0 0 1 -12 0 Z" fill="#F8C020"/>
<path d="M0 0 L-12 0 A12 12 0 0 1 -8.5 -8.5 Z" fill="#F87820"/>
<path d="M0 0 L-8.5 -8.5 A12 12 0 0 1 0 -12 Z" fill="#F05050"/>
<circle r="4" fill="#fff"/>
</g>
<!-- opacity slider -->
<path d="M1629 957.6 H1770" stroke="#E2E4EA" stroke-width="4" stroke-linecap="round"/>
<circle cx="1771" cy="957.4" r="9.2" fill="#FAFAFC" stroke="#E6E8EE" stroke-width="1"/>
<circle cx="1771" cy="957.4" r="5.8" fill="#E2E4EA"/>
</svg>
<!-- spacing inputs -->
<div class="a" style="left:1534.5px;top:660px;width:88px;height:28.5px;border:1px solid #BFC2CA;border-radius:3px;background:#fff"></div>
<div class="t" style="left:1538px;top:665.5px;font-size:15px;letter-spacing:-0.4px;line-height:16px;color:#222">0.00</div>
<div class="arr" style="left:1606px;top:671px;border-left-width:5px;border-right-width:5px;border-top-width:6px"></div>
<div class="a" style="left:1688.5px;top:660px;width:88px;height:28.5px;border:1px solid #E3E4EA;border-radius:3px;background:#fff"></div>
<div class="t" style="left:1692px;top:665.5px;font-size:15px;letter-spacing:-0.4px;line-height:16px;color:#9A9A9A">0.00</div>
<div class="arr" style="left:1760px;top:671px;border-left-width:5px;border-right-width:5px;border-top-width:6px;border-top-color:#999"></div>
<div class="a" style="left:1534.5px;top:706px;width:88px;height:28.5px;border:1px solid #BFC2CA;border-radius:3px;background:#fff"></div>
<div class="t" style="left:1538px;top:711.5px;font-size:15px;line-height:16px;color:#222;letter-spacing:-0.6px">100%</div>
<div class="arr" style="left:1606px;top:717px;border-left-width:5px;border-right-width:5px;border-top-width:6px"></div>
<div class="a" style="left:1688.5px;top:706px;width:88px;height:28.5px;border:1px solid #BFC2CA;border-radius:3px;background:#fff"></div>
<div class="t" style="left:1692px;top:711.5px;font-size:15px;line-height:16px;color:#222">0.00</div>
<div class="arr" style="left:1760px;top:717px;border-left-width:5px;border-right-width:5px;border-top-width:6px"></div>
<div class="a" style="left:1534.5px;top:754px;width:88px;height:28.5px;border:1px solid #E3E4EA;border-radius:3px;background:#fff"></div>
<div class="t" style="left:1538px;top:759.5px;font-size:15px;letter-spacing:-0.4px;line-height:16px;color:#9A9A9A">0.00</div>
<div class="arr" style="left:1606px;top:765px;border-left-width:5px;border-right-width:5px;border-top-width:6px;border-top-color:#999"></div>
<div class="t" style="left:1495px;top:758px;font-size:13.5px;line-height:14px;color:#B0B0B0">A</div>
<div class="t" style="left:1509px;top:758px;font-size:13.5px;line-height:14px;color:#B0B0B0">B</div>
<div class="t" style="left:1495px;top:802px;font-size:16px;line-height:17px;color:#222">形状类型</div>
<div class="t" style="left:1495px;top:947px;font-size:16px;line-height:17px;color:#222">不透明度：</div>
<div class="t" style="left:1593px;top:948px;font-size:15.5px;line-height:16px;color:#222">0</div>
<div class="t" style="left:1798px;top:948px;font-size:15.5px;line-height:16px;color:#222">100</div>
<!-- status bar -->
<svg style="left:0;top:982px" width="1920" height="35" viewBox="0 982 1920 35">
<g fill="none" stroke="#B0B0B0" stroke-width="1.4" stroke-linecap="round" stroke-linejoin="round">
<path d="M28.4 994 L22.2 1001 L28.4 1008 M36.6 994 L30.4 1001 L36.6 1008"/>
<path d="M68 994 L61.6 1001 L68 1008"/>
</g>
<g fill="none" stroke="#333" stroke-width="1.5" stroke-linecap="round" stroke-linejoin="round">
<path d="M237.6 994 L244.6 1001 L237.6 1008"/>
<path d="M268.8 994 L275.4 1001 L268.8 1008 M277 994 L283.6 1001 L277 1008"/>
</g>
<g fill="none" stroke="#B4B4B4" stroke-width="1.3" stroke-linejoin="round">
<path d="M306.6 1008 H301 V992.6 H305.8 M308.6 996.4 H319.6 V1010.4 H308.6 Z M311 991.8 H316.6 V995 M312.8 990.2 L311 991.8 L312.8 993.4"/>
<path d="M340 996 H334.6 V1002 M340.6 996.6 H354.2 V1010.4 H340.6 Z M334.6 1007 H339.6 M338 1005.4 L339.8 1007 L338 1008.6 M334.6 992.4 H348.6 V996.4"/>
</g>
<!-- view icons -->
<g fill="none" stroke="#555" stroke-width="1.5" stroke-linejoin="round">
<rect x="1459.4" y="991.6" width="17.2" height="17.6" rx="1"/>
<path d="M1463 996 H1473 M1463 999.8 H1473 M1463 1003.6 H1473"/>
</g>
<rect x="1487" y="986.2" width="30" height="29.4" rx="4" fill="#E4E7EE"/>
<g fill="none" stroke="#555" stroke-width="1.5" stroke-linejoin="round">
<path d="M1494 1008.8 V1006 H1510.4 V1008.8 M1494 1010.6 H1510.4 M1494 991.4 H1510.4 V1002.4 H1494 Z M1497 995 H1507.6 M1497 998.6 H1507.6"/>
<rect x="1526.4" y="991.6" width="18" height="17.8" rx="1"/>
<path d="M1535.4 991.6 V1009.4 M1529.4 996 H1532.4 M1529.4 1000 H1532.4 M1529.4 1004 H1532.4 M1538.4 996 H1541.4 M1538.4 1000 H1541.4 M1538.4 1004 H1541.4"/>
<path d="M1560.4 1006 V1009.6 H1568.4 V1006 M1570.4 1006 V1009.6 H1578.4 V1006 M1560.4 991.4 H1568.4 V1002.4 H1560.4 Z M1570.4 991.4 H1578.4 V1002.4 H1570.4 Z M1562.8 995 H1566 M1562.8 998.6 H1566 M1572.8 995 H1576 M1572.8 998.6 H1576"/>
</g>
<path d="M1589.4 1000.5 H1599" stroke="#444" stroke-width="1.8"/>
<path d="M1602 1000.5 H1745" stroke="#AAA" stroke-width="1.1"/>
<circle cx="1681" cy="1000.5" r="6" fill="#fff" stroke="#666" stroke-width="1.2"/>
<path d="M1747.6 1000.5 H1758.4 M1753 995 V1006" stroke="#444" stroke-width="1.8"/>
<g fill="none" stroke="#444" stroke-width="1.5" stroke-linecap="round" stroke-linejoin="round">
<path d="M1873 997 V992.6 H1877.4 M1873 992.6 L1878 997.6 M1889.6 997 V992.6 H1885.2 M1889.6 992.6 L1884.6 997.6 M1873 1005 V1009.4 H1877.4 M1873 1009.4 L1878 1004.4 M1889.6 1005 V1009.4 H1885.2 M1889.6 1009.4 L1884.6 1004.4"/>
</g>
</svg>
<div class="a" style="left:82px;top:988px;width:142px;height:26px;border:1px solid #C8C9CE;background:#fff"></div>
<div class="a" style="left:205px;top:989px;width:18px;height:24px;background:#F6F6F8"></div>
<div class="t" style="left:86px;top:994.5px;font-size:15.4px;line-height:16px;color:#111">1 / 4</div>
<div class="arr" style="left:210px;top:998px;border-left-width:5px;border-right-width:5px;border-top-width:6px"></div>
<div class="a" style="left:1763px;top:988px;width:100px;height:26px;border:1px solid #C8C9CE;background:#fff"></div>
<div class="a" style="left:1837px;top:989px;width:25px;height:24px;background:#F6F6F8"></div>
<div class="t" style="left:1767px;top:992.5px;font-size:15.4px;line-height:16px;color:#222;letter-spacing:-0.7px">136.13%</div>
<div class="arr" style="left:1847px;top:998px;border-left-width:5px;border-right-width:5px;border-top-width:6px;border-top-color:#999"></div>
</body></html>
